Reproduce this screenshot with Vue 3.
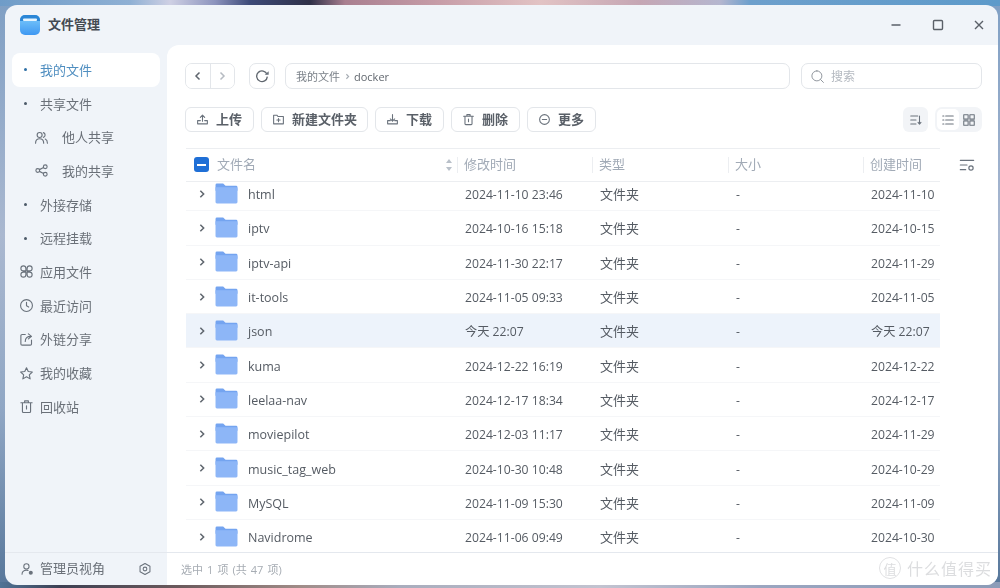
<script setup>
const icons = {
  users: "M9 4a4 4 0 1 1 0 8 4 4 0 0 1 0-8z M2.500 21c0-4.500 2.500-7 6.500-7s6.500 2.500 6.500 7 M15 4.200a4 4 0 0 1 0 7.600 M18 14.500c2.200 1 3.500 3.300 3.500 6.500",
  share: "M6 9a3 3 0 1 1 0 6 3 3 0 0 1 0-6z M18 3a3 3 0 1 1 0 6 3 3 0 0 1 0-6z M18 15a3 3 0 1 1 0 6 3 3 0 0 1 0-6z M8.700 10.600l6.600-3.300 M8.700 13.400l6.600 3.300",
  apps: "M7 3a4 4 0 0 1 4 4v4H7a4 4 0 0 1 0-8z M17 3a4 4 0 0 1 0 8h-4V7a4 4 0 0 1 4-4z M7 13h4v4a4 4 0 1 1-4-4z M13 13h4a4 4 0 1 1-4 4z",
  clock: "M12 2.500a9.500 9.500 0 1 1 0 19 9.500 9.500 0 0 1 0-19z M12 7v5.500l3.500 2",
  link: "M10 4H5a2 2 0 0 0-2 2v13a2 2 0 0 0 2 2h13a2 2 0 0 0 2-2v-6 M10 15c0-5 3-8 9-8 M15 3l5 4-5 4",
  star: "M12 2.800l2.800 6 6.500.8-4.800 4.500 1.300 6.500-5.800-3.300-5.800 3.300 1.300-6.500-4.800-4.500 6.500-.8z",
  trash: "M3 6h18 M9 6V3h6v3 M5.500 6v14a1.500 1.500 0 0 0 1.500 1.500h10a1.500 1.500 0 0 0 1.500-1.500V6 M12 11v5",
  admin: "M11 3a4.500 4.500 0 1 1 0 9 4.500 4.500 0 0 1 0-9z M3.500 21c0-4.500 3-7 7.500-7 1 0 2 .1 2.800.5",
  gear: "M12 2.500l8.500 4.800v9.400L12 21.500l-8.500-4.800V7.300z M12 8.800a3.200 3.200 0 1 1 0 6.400 3.200 3.200 0 0 1 0-6.400z",
  upload: "M8 14H3v6h18v-6h-5 M12 15V4 M8 8l4-4 4 4",
  newFolder: "M3 4h6l2 2.500h10V20H3z M12 10v6 M9 13h6",
  download: "M8 14H3v6h18v-6h-5 M12 3v12 M8 11l4 4 4-4",
  more: "M12 3a9 9 0 1 1 0 18 9 9 0 0 1 0-18z M8 12h8",
  search: "M11 3a8 8 0 1 1 0 16 8 8 0 0 1 0-16z M17 17l4.500 4.500",
  sort: "M3 5h12 M3 12h9 M3 19h9 M18 5v14 M15.500 16l2.500 3 2.500-3",
  list: "M3 5h2 M8 5h13 M3 12h2 M8 12h13 M3 19h2 M8 19h13",
  grid: "M3 3h7.500v7.500H3z M13.500 3H21v7.500h-7.500z M3 13.500h7.500V21H3z M13.500 13.500H21V21h-7.500z",
  config: "M2 5h20 M2 12h10 M2 19h8",
}

const navItems = [
  { label: "我的文件", dot: true, active: true },
  { label: "共享文件", dot: true, open: true },
  { label: "他人共享", icon: "users", sub: true },
  { label: "我的共享", icon: "share", sub: true },
  { label: "外接存储", dot: true },
  { label: "远程挂载", dot: true },
  { label: "应用文件", icon: "apps" },
  { label: "最近访问", icon: "clock" },
  { label: "外链分享", icon: "link" },
  { label: "我的收藏", icon: "star" },
  { label: "回收站", icon: "trash" },
]

const actions = [
  { label: "上传", icon: "upload" },
  { label: "新建文件夹", icon: "newFolder" },
  { label: "下载", icon: "download" },
  { label: "删除", icon: "trash" },
  { label: "更多", icon: "more" },
]

const files = [
  { name: "html", modified: "2024-11-10 23:46", created: "2024-11-10" },
  { name: "iptv", modified: "2024-10-16 15:18", created: "2024-10-15" },
  { name: "iptv-api", modified: "2024-11-30 22:17", created: "2024-11-29" },
  { name: "it-tools", modified: "2024-11-05 09:33", created: "2024-11-05" },
  { name: "json", modified: "今天 22:07", created: "今天 22:07", selected: true },
  { name: "kuma", modified: "2024-12-22 16:19", created: "2024-12-22" },
  { name: "leelaa-nav", modified: "2024-12-17 18:34", created: "2024-12-17" },
  { name: "moviepilot", modified: "2024-12-03 11:17", created: "2024-11-29" },
  { name: "music_tag_web", modified: "2024-10-30 10:48", created: "2024-10-29" },
  { name: "MySQL", modified: "2024-11-09 15:30", created: "2024-11-09" },
  { name: "Navidrome", modified: "2024-11-06 09:49", created: "2024-10-30" },
]
</script>

<template>
  <div class="desktop">
    <div class="window">
      <header class="titlebar">
        <svg class="logo" viewBox="0 0 20 20">
          <defs>
            <linearGradient id="logoFill" x1="0" y1="0" x2="0" y2="1">
              <stop offset="0" stop-color="#7fcdfc" />
              <stop offset="1" stop-color="#3f98f2" />
            </linearGradient>
          </defs>
          <rect width="20" height="20" rx="5" fill="url(#logoFill)" />
          <path d="M0 5a5 5 0 0 1 5-5h10a5 5 0 0 1 5 5v1H0z" fill="#2b86d6" />
          <rect x="3" y="3.500" width="14" height="2.500" rx="1" fill="#e4f4ff" />
        </svg>
        <span class="app-name">文件管理</span>
        <div class="win-controls">
          <svg viewBox="0 0 12 12"><path d="M1.500 6h9" /></svg>
          <svg viewBox="0 0 12 12"><rect x="1.500" y="1.500" width="9" height="9" rx="1" /></svg>
          <svg viewBox="0 0 12 12"><path d="M2 2l8 8 M10 2l-8 8" /></svg>
        </div>
      </header>

      <div class="body">
        <aside class="side">
          <nav class="nav">
            <div
              v-for="item in navItems"
              :key="item.label"
              class="nav-item"
              :class="{ active: item.active, sub: item.sub }"
            >
              <span class="nav-lead">
                <i v-if="item.dot" class="dot"></i>
                <svg v-else class="icon" viewBox="0 0 24 24"><path :d="icons[item.icon]" /></svg>
              </span>
              <span class="nav-text">{{ item.label }}</span>
            </div>
          </nav>
          <div class="side-foot">
            <svg class="icon foot-user" viewBox="0 0 24 24">
              <path :d="icons.admin" />
              <circle class="solid" cx="18.500" cy="18.500" r="3.500" />
            </svg>
            <span class="foot-text">管理员视角</span>
            <svg class="icon foot-gear" viewBox="0 0 24 24"><path :d="icons.gear" /></svg>
          </div>
        </aside>

        <main class="main">
          <div class="content">
            <div class="toolbar">
              <div class="nav-group">
                <button class="nav-btn">
                  <svg viewBox="0 0 12 12"><path d="M7.500 2.500L4 6l3.500 3.500" /></svg>
                </button>
                <button class="nav-btn next">
                  <svg viewBox="0 0 12 12"><path d="M4.500 2.500L8 6 4.500 9.500" /></svg>
                </button>
              </div>
              <button class="refresh">
                <svg viewBox="0 0 24 24">
                  <path d="M19.500 9.500A8 8 0 1 0 20 13" />
                  <path class="solid" d="M16 10h6V5z" />
                </svg>
              </button>
              <div class="path">
                <span>我的文件</span>
                <svg viewBox="0 0 12 12"><path d="M4.500 3L7.500 6 4.500 9" /></svg>
                <span class="path-cur">docker</span>
              </div>
              <div class="search">
                <svg class="icon" viewBox="0 0 24 24"><path :d="icons.search" /></svg>
                <span>搜索</span>
              </div>
            </div>

            <div class="actions">
              <button v-for="a in actions" :key="a.label" class="action">
                <svg class="icon" viewBox="0 0 24 24"><path :d="icons[a.icon]" /></svg>
                <span class="action-text">{{ a.label }}</span>
              </button>
              <button class="sort-btn">
                <svg class="icon" viewBox="0 0 24 24"><path :d="icons.sort" /></svg>
              </button>
              <div class="view-toggle">
                <span class="view on">
                  <svg class="icon" viewBox="0 0 24 24"><path :d="icons.list" /></svg>
                </span>
                <span class="view">
                  <svg class="icon" viewBox="0 0 24 24"><path :d="icons.grid" /></svg>
                </span>
              </div>
            </div>

            <div class="table-wrap">
              <div class="table">
                <div class="thead">
                  <div class="th th-name">
                    <span class="check"><i></i></span>
                    <span>文件名</span>
                    <svg class="sort-arrows" viewBox="0 0 8 14">
                      <path d="M4 1l3 4H1z M4 13l3-4H1z" />
                    </svg>
                  </div>
                  <div class="th">修改时间</div>
                  <div class="th">类型</div>
                  <div class="th">大小</div>
                  <div class="th">创建时间</div>
                </div>
                <div class="rows">
                  <div class="rows-inner">
                    <div
                      v-for="f in files"
                      :key="f.name"
                      class="row"
                      :class="{ selected: f.selected }"
                    >
                      <div class="td td-name">
                        <svg class="chevron" viewBox="0 0 12 12"><path d="M4 2l4 4-4 4" /></svg>
                        <svg class="folder" viewBox="0 0 24 22">
                          <path fill="#74a4f0" d="M2 .5h6.500L11 3h11a1.500 1.500 0 0 1 1.500 1.500V8H.5V2A1.500 1.500 0 0 1 2 .5z" />
                          <path fill="#8db6f7" d="M.5 4.500H22a1.500 1.500 0 0 1 1.500 1.500v14a1.500 1.500 0 0 1-1.500 1.500H2A1.500 1.500 0 0 1 .5 20z" />
                        </svg>
                        <span>{{ f.name }}</span>
                      </div>
                      <div class="td">{{ f.modified }}</div>
                      <div class="td td-cjk">文件夹</div>
                      <div class="td">-</div>
                      <div class="td">{{ f.created }}</div>
                    </div>
                  </div>
                </div>
              </div>
              <div class="table-config">
                <svg class="icon" viewBox="0 0 24 24">
                  <path :d="icons.config" />
                  <circle cx="18" cy="16.500" r="3.200" />
                </svg>
              </div>
            </div>
          </div>

          <footer class="status">
            <span>选中 1 项 (共 47 项)</span>
          </footer>
        </main>
      </div>
    </div>

    <div class="watermark">
      <span class="wm-badge">值</span>
      <span>什么值得买</span>
    </div>
  </div>
</template>

<style>
html,
body {
  margin: 0;
  background: #8ea8c8;
}
</style>

<style scoped>
.desktop {
  position: relative;
  width: 1000px;
  height: 588px;
  box-sizing: border-box;
  padding: 5px 2px 3px 5px;
  overflow: hidden;
  font-family: "Open Sans", "Noto Sans CJK SC", sans-serif;
  font-size: 13px;
  color: #555b63;
  background:
    linear-gradient(90deg, #6f9cc8 0, #8fb0d4 130px, #cfd0e4 170px, #8c93bd 215px, #3d4a78 250px, #2f3048 310px, #a97f90 345px, #c79da8 440px, #e2c3c4 540px, #c5a6b4 640px, #b5b6cf 720px, #6d9fcc 750px, #5d9aca 1000px) top / 100% 6px no-repeat,
    linear-gradient(90deg, #4f7396 0, #3c3f52 60px, #6b5a5c 180px, #a08c88 300px, #a9adbd 400px, #c2c3d0 600px, #9ba6c0 760px, #8c9cb8 1000px) bottom / 100% 6px no-repeat,
    linear-gradient(180deg, #7f9fc4, #aab8d0 40%, #8fa6c4 70%, #56769a);
}

.window {
  height: 100%;
  display: flex;
  flex-direction: column;
  background: #f0f4f9;
  border-radius: 12px;
  overflow: hidden;
  filter: blur(0.4px);
}

svg {
  display: block;
}

.icon {
  width: 16px;
  height: 16px;
  fill: none;
  stroke: #6a727c;
  stroke-width: 1.8;
  stroke-linecap: round;
  stroke-linejoin: round;
  flex: none;
}

.solid {
  fill: #6a727c;
  stroke: none;
}

.titlebar {
  height: 40px;
  flex: none;
  display: flex;
  align-items: center;
  padding-left: 15px;
  padding-right: 13px;
}

.logo {
  width: 20px;
  height: 20px;
  margin-right: 8px;
}

.app-name {
  font-size: 13px;
  font-weight: 700;
  color: #444a52;
  margin-bottom: 4px;
}

.win-controls {
  margin-left: auto;
  display: flex;
  gap: 29.500px;
}

.win-controls svg {
  width: 12px;
  height: 12px;
  fill: none;
  stroke: #5a6068;
  stroke-width: 1.4;
}

.body {
  flex: 1;
  min-height: 0;
  display: flex;
}

.side {
  width: 162px;
  flex: none;
  display: flex;
  flex-direction: column;
}

.nav {
  flex: 1;
  padding: 8px 7px 0;
}

.nav-item {
  height: 33.700px;
  display: flex;
  align-items: center;
  color: #6a7078;
  border-radius: 8px;
  padding-left: 8px;
}

.nav-text {
  margin-bottom: 1px;
}

.nav-item.active {
  background: #fff;
  color: #4f8ec0;
}

.nav-item.sub {
  padding-left: 23px;
}

.nav-lead {
  width: 20px;
  display: flex;
  justify-content: flex-start;
  flex: none;
}

.nav-item.sub .nav-lead {
  width: 27px;
}

.dot {
  width: 3px;
  height: 3px;
  border-radius: 50%;
  background: #4c5a68;
  margin-left: 4px;
}

.nav-item.active .dot {
  background: #2f70a6;
}

.nav-item .icon {
  width: 15px;
  height: 15px;
  margin-left: -1px;
}

.side-foot {
  height: 33px;
  box-sizing: border-box;
  border-top: 1px solid #e4e8ee;
  display: flex;
  align-items: center;
  padding-left: 15px;
  color: #6a7078;
}

.foot-text {
  margin-bottom: 3px;
}

.foot-user {
  margin-right: 6px;
  width: 14px;
  height: 14px;
}

.foot-gear {
  margin-left: auto;
  margin-right: 15px;
  width: 14px;
  height: 14px;
}

.main {
  flex: 1;
  min-width: 0;
  background: #fff;
  border-top-left-radius: 12px;
  display: flex;
  flex-direction: column;
}

.content {
  flex: 1;
  min-height: 0;
  padding: 18px 16px 0 18px;
  display: flex;
  flex-direction: column;
}

.toolbar {
  display: flex;
  align-items: center;
  height: 26px;
  flex: none;
}

button {
  font: inherit;
  color: inherit;
  background: #fff;
  padding: 0;
  margin: 0;
}

.nav-group {
  width: 50px;
  height: 26px;
  box-sizing: border-box;
  display: flex;
  border: 1px solid #e3e6ea;
  border-radius: 7px;
  overflow: hidden;
}

.nav-btn {
  flex: 1;
  border: 0;
  display: flex;
  align-items: center;
  justify-content: center;
}

.nav-btn svg {
  width: 12px;
  height: 12px;
  fill: none;
  stroke: #5f666e;
  stroke-width: 1.5;
}

.nav-btn.next {
  border-left: 1px solid #e3e6ea;
}

.nav-btn.next svg {
  stroke: #b6bbc2;
}

.refresh {
  width: 26px;
  height: 26px;
  margin-left: 14px;
  box-sizing: border-box;
  border: 1px solid #e3e6ea;
  border-radius: 7px;
  display: flex;
  align-items: center;
  justify-content: center;
}

.refresh svg {
  width: 16px;
  height: 16px;
  fill: none;
  stroke: #5f666e;
  stroke-width: 2;
}

.path {
  width: 505px;
  height: 26px;
  margin-left: 10px;
  box-sizing: border-box;
  border: 1px solid #e3e6ea;
  border-radius: 7px;
  display: flex;
  align-items: center;
  padding-left: 10px;
  font-size: 11px;
  color: #7a8088;
}

.path svg {
  width: 9px;
  height: 9px;
  margin: 0 2.500px;
  fill: none;
  stroke: #a6acb3;
  stroke-width: 1.5;
}

.path-cur {
  color: #62686f;
}

.search {
  width: 181px;
  height: 26px;
  margin-left: 11px;
  box-sizing: border-box;
  border: 1px solid #e3e6ea;
  border-radius: 7px;
  display: flex;
  align-items: center;
  padding-left: 8px;
  gap: 6px;
  font-size: 12px;
  color: #b4b9c0;
}

.search .icon {
  width: 15px;
  height: 15px;
  stroke: #8a9097;
  stroke-width: 1.5;
}

.actions {
  margin-top: 18px;
  flex: none;
  height: 25px;
  display: flex;
  align-items: stretch;
  gap: 7px;
}

.action {
  box-sizing: border-box;
  min-width: 69px;
  border: 1px solid #e3e6ea;
  border-radius: 6px;
  display: flex;
  align-items: center;
  gap: 7px;
  padding: 0 10px 0 10px;
  font-weight: 600;
  color: #5a6068;
}

.action-text {
  margin-bottom: 2px;
}

.action .icon {
  width: 13px;
  height: 13px;
  stroke-width: 2;
}

.sort-btn {
  margin-left: auto;
  width: 25px;
  border: 0;
  border-radius: 6px;
  background: #f2f4f7;
  display: flex;
  align-items: center;
  justify-content: center;
}

.sort-btn .icon {
  width: 14px;
  height: 14px;
}

.view-toggle {
  width: 47px;
  box-sizing: border-box;
  background: #f2f4f7;
  border-radius: 7px;
  padding: 2px;
  display: flex;
}

.view {
  flex: 1;
  border-radius: 5px;
  display: flex;
  align-items: center;
  justify-content: center;
}

.view.on {
  background: #fff;
}

.view .icon {
  width: 14px;
  height: 14px;
}

.table-wrap {
  flex: 1;
  min-height: 0;
  margin-top: 16px;
  display: flex;
}

.table {
  width: 754px;
  margin-left: 1px;
  flex: none;
  display: flex;
  flex-direction: column;
}

.thead,
.row {
  display: grid;
  grid-template-columns: 271px 135px 136px 135px 77px;
}

.thead {
  height: 34px;
  flex: none;
  box-sizing: border-box;
  border-top: 1px solid #eceef1;
  border-bottom: 1px solid #eceef1;
  color: #a1aab6;
}

.th {
  display: flex;
  align-items: center;
  padding-left: 7px;
  padding-bottom: 3px;
  position: relative;
}

.th + .th::before {
  content: "";
  position: absolute;
  left: 0;
  top: 8px;
  bottom: 8px;
  width: 1px;
  background: #eceef1;
}

.th-name {
  padding-left: 8px;
  gap: 8px;
}

.check {
  width: 15px;
  height: 15px;
  margin-top: 2px;
  border-radius: 3px;
  background: #1f6fd6;
  display: flex;
  align-items: center;
  justify-content: center;
}

.check i {
  width: 9px;
  height: 2px;
  background: #fff;
}

.sort-arrows {
  width: 8px;
  height: 14px;
  margin-top: 3px;
  margin-left: auto;
  margin-right: 4px;
  fill: #b9c0c9;
}

.rows {
  flex: 1;
  min-height: 0;
  overflow: hidden;
}

.rows-inner {
  margin-top: -5px;
}

.row {
  height: 34.300px;
  box-sizing: border-box;
  border-bottom: 1px solid #f5f6f8;
  color: #555b63;
}

.row.selected {
  background: #edf3fb;
}

.td {
  display: flex;
  align-items: center;
  padding-left: 8px;
  padding-top: 2px;
  font-size: 12.200px;
  white-space: nowrap;
}

.td-cjk {
  padding-top: 0;
  font-size: 13px;
}

.row.selected .td:nth-child(2),
.row.selected .td:nth-child(5) {
  padding-top: 0;
}

.td-name {
  padding-left: 11px;
  font-size: 12.500px;
}

.chevron {
  width: 10px;
  height: 10px;
  margin-bottom: 2px;
  fill: none;
  stroke: #5f666e;
  stroke-width: 1.8;
  margin-right: 8px;
}

.folder {
  width: 23px;
  height: 21px;
  margin-right: 10px;
  margin-bottom: 3px;
}

.table-config {
  flex: 1;
  height: 34px;
  display: flex;
  align-items: center;
  padding-left: 19px;
}

.table-config .icon {
  width: 16px;
  height: 16px;
  stroke-width: 1.8;
}

.status {
  height: 33px;
  flex: none;
  box-sizing: border-box;
  border-top: 1px solid #e4e8ee;
  display: flex;
  align-items: center;
  padding-left: 14px;
  font-size: 11px;
  word-spacing: 1.200px;
  color: #a6acb3;
}

.watermark {
  position: absolute;
  right: 8px;
  bottom: 8px;
  display: flex;
  align-items: center;
  gap: 6px;
  font-size: 16px;
  letter-spacing: 1px;
  color: #dcdddf;
}

.wm-badge {
  width: 20px;
  height: 20px;
  border: 1px solid #e0e1e3;
  border-radius: 50%;
  display: flex;
  align-items: center;
  justify-content: center;
  font-size: 13px;
  letter-spacing: 0;
}
</style>
